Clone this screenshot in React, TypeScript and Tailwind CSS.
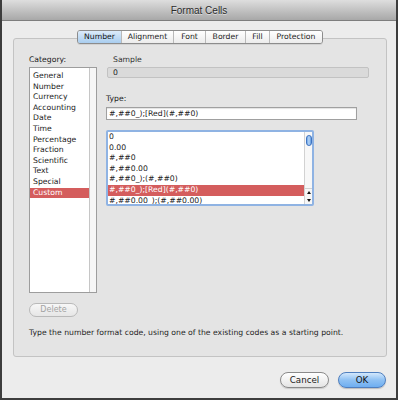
const categories = [
  'General',
  'Number',
  'Currency',
  'Accounting',
  'Date',
  'Time',
  'Percentage',
  'Fraction',
  'Scientific',
  'Text',
  'Special',
  'Custom',
];

const formats = [
  '0',
  '0.00',
  '#,##0',
  '#,##0.00',
  '#,##0_);(#,##0)',
  '#,##0_);[Red](#,##0)',
  '#,##0.00_);(#,##0.00)',
];

const tabs = [
  { label: 'Number', width: 'w-[43px]', active: true },
  { label: 'Alignment', width: 'w-[52px]', active: false },
  { label: 'Font', width: 'w-[32px]', active: false },
  { label: 'Border', width: 'w-[40px]', active: false },
  { label: 'Fill', width: 'w-[24px]', active: false },
  { label: 'Protection', width: 'w-[53px]', active: false },
];

function TabBar() {
  return (
    <div className="relative z-10 -mb-[6px] mt-[9px] flex justify-center">
      <div className="flex h-[14px] overflow-hidden rounded-[3px] border border-[#8c8c8c] shadow-[0_1px_0_rgba(0,0,0,0.08)]">
        {tabs.map((tab, i) => (
          <div
            key={tab.label}
            className={`${tab.width} flex items-center justify-center leading-none ${
              i > 0 ? 'border-l border-[#b9b9b9]' : ''
            } ${
              tab.active
                ? 'bg-gradient-to-b from-[#dcebfa] to-[#a9cdef] text-[#111]'
                : 'bg-gradient-to-b from-[#ffffff] to-[#ececec] text-[#222]'
            }`}
          >
            {tab.label}
          </div>
        ))}
      </div>
    </div>
  );
}

function CategoryList() {
  return (
    <div className="mt-[2px] flex h-[226px] w-[68px] border border-[#9d9d9d] bg-white">
      <div className="flex-1 pt-[3px]">
        {categories.map((c) => (
          <div
            key={c}
            className={`h-[10.6px] pl-[3px] leading-[10.6px] ${
              c === 'Custom' ? 'bg-[#d45d5d] text-white' : 'text-[#1a1a1a]'
            }`}
          >
            {c}
          </div>
        ))}
      </div>
      <div className="w-[7px] border-l border-[#c6c6c6] bg-[#f6f6f6]" />
    </div>
  );
}

function FormatList() {
  return (
    <div className="mt-[10px] flex h-[76px] w-[208px] rounded-[2px] border-2 border-[#8fb3e3] bg-white">
      <div className="flex-1 overflow-hidden">
        {formats.map((f, i) => (
          <div
            key={f}
            className={`h-[10.6px] whitespace-nowrap pl-[1px] leading-[10.6px] ${
              i === 5 ? 'bg-[#d45d5d] text-white' : 'text-[#1a1a1a]'
            }`}
          >
            {f}
          </div>
        ))}
      </div>
      <div className="flex w-[8px] flex-col border-l border-[#d2d2d2] bg-[#f7f7f7]">
        <div className="mx-auto mt-[3px] h-[11px] w-[6px] rounded-full border border-[#3f74c2] bg-gradient-to-r from-[#6fa6e6] via-[#b9d7f7] to-[#5f97da]" />
        <div className="flex-1" />
        <div className="flex h-[8px] items-center justify-center border-t border-[#d2d2d2]">
          <svg width="4" height="3" viewBox="0 0 4 3">
            <path d="M2 0L4 3H0Z" fill="#111" />
          </svg>
        </div>
        <div className="flex h-[8px] items-center justify-center">
          <svg width="4" height="3" viewBox="0 0 4 3">
            <path d="M0 0H4L2 3Z" fill="#111" />
          </svg>
        </div>
      </div>
    </div>
  );
}

export default function App() {
  return (
    <div className="flex h-[400px] w-[398px] flex-col overflow-hidden border-x-2 border-b-2 border-[#3d3d3d] bg-[#ececec] font-['DejaVu_Sans',Verdana,sans-serif] text-[7.7px] text-[#1a1a1a]">
      <div className="flex h-[21px] shrink-0 items-center justify-center border-b border-[#7e7e7e] bg-gradient-to-b from-[#dedede] to-[#a8a8a8] font-['Liberation_Sans',Arial,sans-serif] text-[10px] text-[#2b2b2b] [text-shadow:0_1px_0_rgba(255,255,255,0.5)]">
        Format Cells
      </div>
      <div className="pl-[11px] pr-[9px]">
        <TabBar />
        <div className="h-[319px] rounded-[3px] border border-[#c3c3c3] bg-[#e4e4e4] pl-[15px] pt-[16px]">
          <div className="flex">
            <div className="flex w-[68px] flex-col">
              <div className="h-[10px] leading-[10px]">Category:</div>
              <CategoryList />
              <button
                disabled
                className="mt-[10px] h-[14px] w-[49px] rounded-full border border-[#b9b9b9] bg-gradient-to-b from-[#f7f7f7] to-[#e6e6e6] text-[8px] leading-none text-[#a3a3a3]"
              >
                Delete
              </button>
            </div>
            <div className="ml-[9px] flex flex-col">
              <div className="ml-[7px] h-[10px] leading-[10px] text-[#333]">Sample</div>
              <div className="ml-[1px] mt-[2px] flex h-[11px] w-[262px] items-center rounded-[2px] border border-[#c2c2c2] bg-[#dadada] pl-[5px] text-[#222]">
                0
              </div>
              <div className="mt-[16px] h-[10px] leading-[10px]">Type:</div>
              <div className="mt-[3px] flex h-[13px] w-[251px] items-center border border-[#a0a0a0] bg-white pl-[2px] shadow-[inset_0_1px_1px_rgba(0,0,0,0.12)]">
                #,##0_);[Red](#,##0)
              </div>
              <FormatList />
            </div>
          </div>
          <div className="mt-[11px] h-[10px] leading-[10px] text-[#1f1f1f]">
            Type the number format code, using one of the existing codes as a starting point.
          </div>
        </div>
      </div>
      <div className="mt-[15px] flex justify-end gap-[9px] pr-[10px]">
        <button className="h-[16px] w-[49px] rounded-full border border-[#8a8a8a] bg-gradient-to-b from-[#ffffff] to-[#e4e4e4] text-[8.7px] leading-none text-[#1a1a1a] shadow-[0_1px_1px_rgba(0,0,0,0.15)]">
          Cancel
        </button>
        <button className="h-[16px] w-[48px] rounded-full border border-[#4f7fbf] bg-gradient-to-b from-[#d3e8fc] via-[#8fc1f3] to-[#6eaef0] text-[8.7px] leading-none text-[#111] shadow-[0_1px_1px_rgba(0,0,0,0.2)]">
          OK
        </button>
      </div>
    </div>
  );
}
